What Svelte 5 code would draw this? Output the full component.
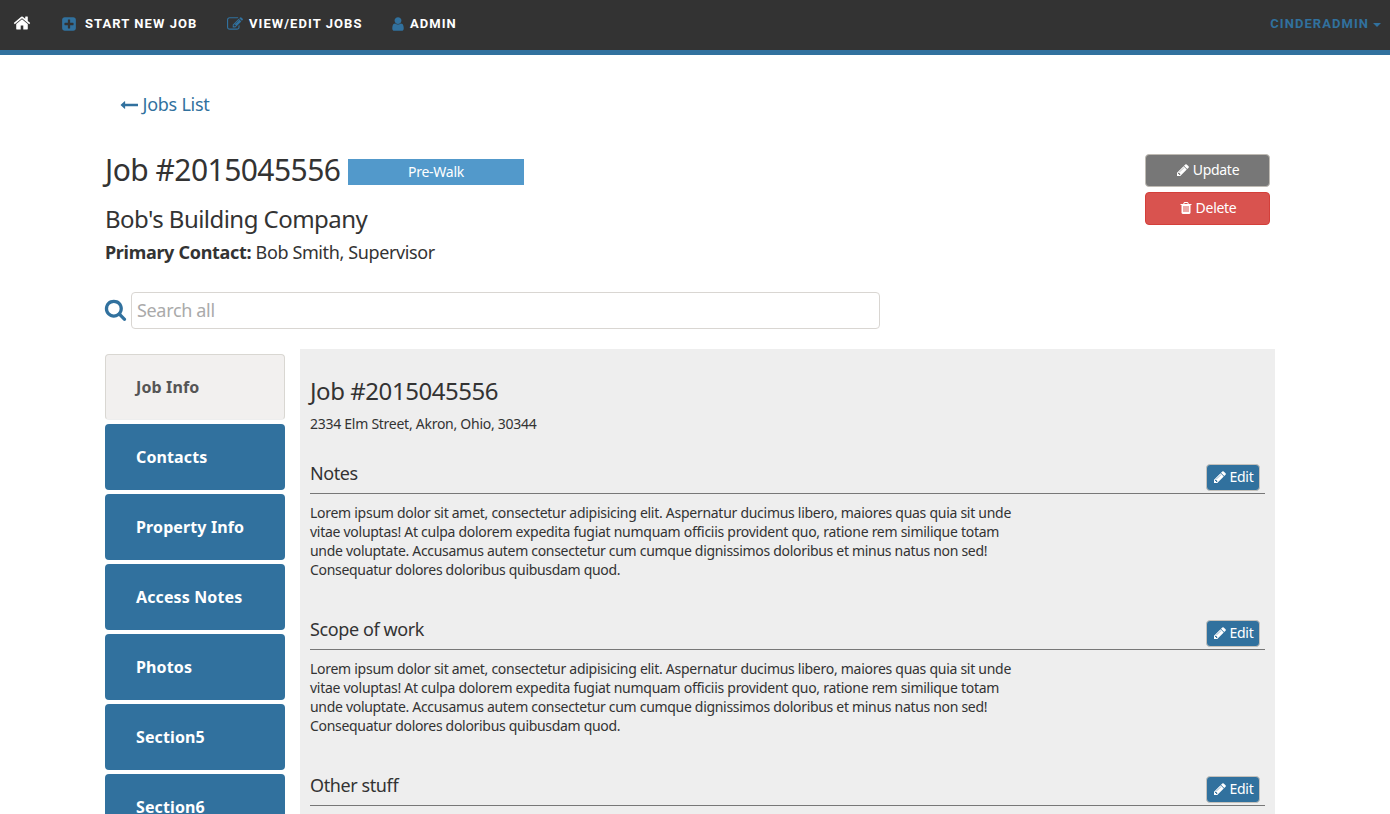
<script>
  const icons = {
    home: 'M1472 992v480q0 26-19 45t-45 19h-384v-384h-256v384h-384q-26 0-45-19t-19-45v-480q0-1 .5-3t.5-3l575-474 575 474q1 2 1 6zm223-69l-62 74q-8 9-21 11h-3q-13 0-21-7l-692-577-692 577q-12 8-24 7-13-2-21-11l-62-74q-8-10-7-23.500t11-21.500l719-599q32-26 76-26t76 26l244 204v-195q0-14 9-23t23-9h192q14 0 23 9t9 23v408l219 182q10 8 11 21.500t-7 23.500z',
    plus: 'M1408 960v-128q0-26-19-45t-45-19h-320v-320q0-26-19-45t-45-19h-128q-26 0-45 19t-19 45v320h-320q-26 0-45 19t-19 45v128q0 26 19 45t45 19h320v320q0 26 19 45t45 19h128q26 0 45-19t19-45v-320h320q26 0 45-19t19-45zm256-544v960q0 119-84.500 203.500t-203.500 84.500h-960q-119 0-203.500-84.500t-84.500-203.500v-960q0-119 84.500-203.500t203.500-84.500h960q119 0 203.500 84.500t84.500 203.500z',
    compose: 'M888 1184l116-116-152-152-116 116v56h96v96h56zm440-720q-16-16-33 1l-350 350q-17 17-1 33t33-1l350-350q17-17 1-33zm80 594v190q0 119-84.500 203.500t-203.500 84.500h-832q-119 0-203.500-84.500t-84.500-203.500v-832q0-119 84.500-203.500t203.500-84.500h832q63 0 117 25 15 7 18 23 3 17-9 29l-49 49q-14 14-32 8-23-6-45-6h-832q-66 0-113 47t-47 113v832q0 66 47 113t113 47h832q66 0 113-47t47-113v-126q0-13 9-22l64-64q15-15 35-7t20 29zm-96-738l288 288-672 672h-288v-288zm444 132l-92 92-288-288 92-92q28-28 68-28t68 28l152 152q28 28 28 68t-28 68z',
    user: 'M1536 1399q0 109-62.500 187t-150.500 78h-854q-88 0-150.500-78t-62.500-187q0-85 8.500-160.500t31.500-152 58.500-131 94-89 134.500-34.500q131 128 313 128t313-128q76 0 134.500 34.500t94 89 58.500 131 31.500 152 8.500 160.500zm-256-887q0 159-112.500 271.500t-271.500 112.500-271.500-112.500-112.500-271.500 112.500-271.500 271.500-112.500 271.500 112.500 112.500 271.500z',
    arrow: 'M1792 800v192q0 14-9 23t-23 9h-1248v224q0 21-19 29t-35-5l-384-350q-10-10-10-23 0-14 10-24l384-354q16-14 35-6 19 9 19 29v224h1248q14 0 23 9t9 23z',
    pencil: 'M491 1536l91-91-235-235-91 91v107h128v128h107zm523-928q0-22-22-22-10 0-17 7l-542 542q-7 7-7 17 0 22 22 22 10 0 17-7l542-542q7-7 7-17zm-54-192l416 416-832 832h-416v-416zm683 96q0 53-37 90l-166 166-416-416 166-165q36-38 90-38 53 0 91 38l235 234q37 39 37 91z',
    trash: 'M704 1376v-704q0-14-9-23t-23-9h-64q-14 0-23 9t-9 23v704q0 14 9 23t23 9h64q14 0 23-9t9-23zm256 0v-704q0-14-9-23t-23-9h-64q-14 0-23 9t-9 23v704q0 14 9 23t23 9h64q14 0 23-9t9-23zm256 0v-704q0-14-9-23t-23-9h-64q-14 0-23 9t-9 23v704q0 14 9 23t23 9h64q14 0 23-9t9-23zm-544-992h448l-48-117q-7-9-17-11h-317q-10 2-17 11zm928 32v64q0 14-9 23t-23 9h-96v948q0 83-47 143.500t-113 60.500h-832q-66 0-113-58.500t-47-141.500v-952h-96q-14 0-23-9t-9-23v-64q0-14 9-23t23-9h309l70-167q15-37 54-63t79-26h320q40 0 79 26t54 63l70 167h309q14 0 23 9t9 23z',
    search: 'M1216 832q0-185-131.500-316.500t-316.500-131.500-316.500 131.500-131.500 316.500 131.500 316.500 316.500 131.500 316.500-131.500 131.500-316.500zm512 832q0 52-38 90t-90 38q-54 0-90-38l-343-342q-179 124-399 124-143 0-273.500-55.500t-225-150-150-225-55.500-273.500 55.500-273.500 150-225 225-150 273.500-55.500 273.500 55.500 225 150 150 225 55.500 273.500q0 220-124 399l343 343q37 37 37 90z'
  };

  const tabs = ['Job Info', 'Contacts', 'Property Info', 'Access Notes', 'Photos', 'Section5', 'Section6'];
  const sections = ['Notes', 'Scope of work', 'Other stuff'];
  const lines = [
    'Lorem ipsum dolor sit amet, consectetur adipisicing elit. Aspernatur ducimus libero, maiores quas quia sit unde',
    'vitae voluptas! At culpa dolorem expedita fugiat numquam officiis provident quo, ratione rem similique totam',
    'unde voluptate. Accusamus autem consectetur cum cumque dignissimos doloribus et minus natus non sed!',
    'Consequatur dolores doloribus quibusdam quod.'
  ];
</script>

{#snippet icon(name, size)}
  <svg class="icon" width={size} height={size} viewBox="0 0 1792 1792" aria-hidden="true"><path d={icons[name]} /></svg>
{/snippet}

<div class="page">
  <nav>
    <a class="home" href="#home" aria-label="Home">{@render icon('home', 18)}</a>
    <a class="start" href="#start">{@render icon('plus', 16)}<span>START NEW JOB</span></a>
    <a class="view" href="#jobs">{@render icon('compose', 16)}<span>VIEW/EDIT JOBS</span></a>
    <a class="admin" href="#admin">{@render icon('user', 16)}<span>ADMIN</span></a>
    <a class="account" href="#account"><span>CINDERADMIN</span><i class="caret"></i></a>
  </nav>

  <main>
    <a class="back" href="#jobs">{@render icon('arrow', 18)}<span>Jobs List</span></a>

    <header>
      <div class="summary">
        <div class="title"><h1>Job #2015045556</h1><span class="status">Pre-Walk</span></div>
        <h2 class="company">Bob's Building Company</h2>
        <p class="contact"><b>Primary Contact:</b> <span>Bob Smith, Supervisor</span></p>
      </div>
      <div class="actions">
        <button class="update">{@render icon('pencil', 14)}<span>Update</span></button>
        <button class="delete">{@render icon('trash', 14)}<span>Delete</span></button>
      </div>
    </header>

    <div class="search">{@render icon('search', 23)}<input placeholder="Search all" /></div>

    <div class="columns">
      <div class="tabs">
        {#each tabs as tab, i}
          <a href="#tab" class:active={i === 0}><span>{tab}</span></a>
        {/each}
      </div>
      <article>
        <h2>Job #2015045556</h2>
        <p class="address">2334 Elm Street, Akron, Ohio, 30344</p>
        {#each sections as section, i}
          <section>
            <div class="heading">
              <h3>{section}</h3>
              <button class="edit">{@render icon('pencil', 14)}<span>Edit</span></button>
            </div>
            {#if i < 2}
              <p class="body">{#each lines as line}<span>{line}</span>{/each}</p>
            {/if}
          </section>
        {/each}
      </article>
    </div>
  </main>
</div>

<style>
  :global(body) { margin: 0; background: #fff; overflow: hidden; }
  * { box-sizing: border-box; }
  .page { height: 814px; overflow: hidden; color: #333; font: 14px/20px "Noto Sans", sans-serif; }
  h1, h2, h3, p { margin: 0; font-weight: 400; }
  a { color: #31719e; text-decoration: none; display: flex; }
  .icon { fill: currentColor; display: block; flex: none; }
  button, input { font-family: inherit; }

  nav { height: 55px; background: #333; border-bottom: 5px solid #31719e; display: flex; font: 700 13px/18px Roboto, sans-serif; letter-spacing: 1.06px; padding: 15px 9px 0 13px; }
  nav a { height: 18px; align-items: center; }
  nav a span { color: #fff; white-space: nowrap; }
  .home { color: #fff; width: 48px; }
  .home .icon { margin-top: -2px; }
  .start { width: 166px; gap: 8px; }
  .view { width: 163px; gap: 6px; }
  .admin { gap: 4px; }
  .account { margin-left: auto; gap: 4px; }
  .account span { color: #31719e; }
  .caret { border: 4px solid transparent; border-top-color: #31719e; border-bottom: 0; margin-top: 2px; }

  main { width: 1170px; margin-left: 105px; }
  .back { padding: 37px 0 0 15px; font-size: 18px; line-height: 25px; align-items: center; gap: 4.5px; letter-spacing: -.25px; }
  header { display: flex; justify-content: space-between; padding: 33px 5px 0 0; height: 171px; }
  .title { display: flex; align-items: flex-start; gap: 8px; }
  h1 { font-size: 30px; line-height: 40px; width: 235px; white-space: nowrap; letter-spacing: -.54px; }
  .status { width: 176px; height: 26px; margin-top: 9px; background: #5299cb; color: #fff; text-align: center; line-height: 26px; letter-spacing: -.25px; }
  .company { font-size: 24px; line-height: 32px; margin-top: 13px; letter-spacing: -.54px; }
  .contact { font-size: 18px; line-height: 24px; margin-top: 5px; white-space: nowrap; letter-spacing: -.38px; }
  .contact b { letter-spacing: -.31px; }
  .actions { display: flex; flex-direction: column; gap: 5px; padding-top: 4px; }
  button { display: flex; align-items: center; justify-content: center; gap: 3px; color: #fff; font-size: 14px; line-height: 20px; border-radius: 4px; padding: 0; letter-spacing: -.3px; }
  button span { margin-top: -2px; }
  button .icon { margin-top: -1px; }
  .actions button { width: 125px; height: 33px; }
  .update { background: #777; border: 1px solid #bfbbb4; }
  .delete { background: #d9534f; border: 1px solid #d43f3a; }

  .search { display: flex; align-items: flex-start; height: 61px; padding-top: 4px; color: #31719e; }
  .search .icon { margin: 6px 0 0 -1px; }
  input { width: 749px; height: 37px; margin-left: 4px; border: 1px solid #d9d6d2; border-radius: 4px; padding: 0 5px 2px; font-size: 18px; letter-spacing: -.33px; background: #fff; }
  input::placeholder { color: #aaa; opacity: 1; }

  .columns { display: flex; gap: 15px; }
  .tabs { width: 180px; padding-top: 5px; display: flex; flex-direction: column; gap: 4px; }
  .tabs a { height: 66px; flex: none; background: #31719e; color: #fff; border-radius: 4px; padding-left: 31px; align-items: center; font-size: 16px; font-weight: 700; letter-spacing: .12px; }
  .tabs .active { background: #f2f0ef; color: #555; border: 1px solid #d9d7d2; border-bottom-color: #eee; padding-left: 30px; }
  article { width: 975px; background: #eee; padding: 25px 10px 0; height: 700px; }
  article h2 { font-size: 24px; line-height: 34px; letter-spacing: -.45px; }
  .address { margin-top: 6px; line-height: 20px; height: 39px; letter-spacing: -.265px; }
  section { height: 156px; }
  .heading { height: 41px; border-bottom: 1px solid #777; display: flex; justify-content: space-between; padding: 7px 5px 0 0; }
  h3 { font-size: 18px; line-height: 26px; letter-spacing: -.4px; }
  .edit { width: 54px; height: 27px; margin-top: 4px; background: #31719e; border: 1px solid #c5c1bb; }
  .body { padding-top: 9px; line-height: 19px; letter-spacing: -.275px; }
  .body span { display: block; white-space: nowrap; }
  .body span:nth-child(n + 3) { letter-spacing: -.305px; }
</style>
